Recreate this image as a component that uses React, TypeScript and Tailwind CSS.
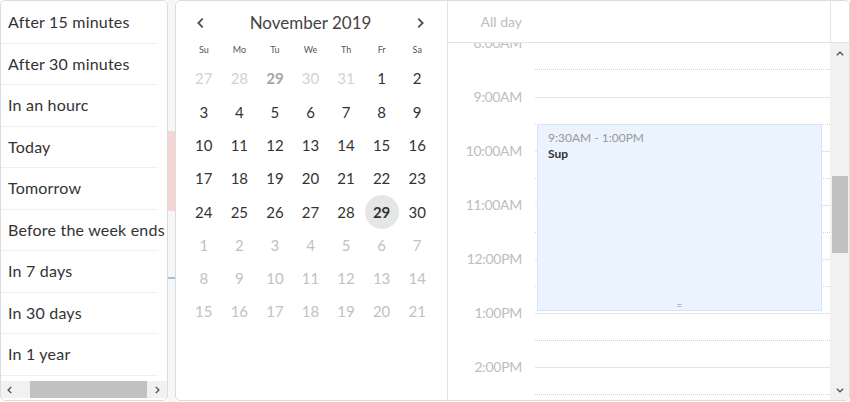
import React from 'react';

const quickPicks = [
  'After 15 minutes',
  'After 30 minutes',
  'In an hourc',
  'Today',
  'Tomorrow',
  'Before the week ends',
  'In 7 days',
  'In 30 days',
  'In 1 year',
];

const weekDays = ['Su', 'Mo', 'Tu', 'We', 'Th', 'Fr', 'Sa'];

type Day = { n: number; kind: 'prev' | 'cur' | 'next'; bold?: boolean; selected?: boolean };

function buildDays(): Day[] {
  const days: Day[] = [];
  [27, 28, 29, 30, 31].forEach((n) => days.push({ n, kind: 'prev', bold: n === 29 }));
  for (let n = 1; n <= 30; n++) days.push({ n, kind: 'cur', selected: n === 29 });
  for (let n = 1; n <= 21; n++) days.push({ n, kind: 'next' });
  return days;
}

const hours = ['8:00AM', '9:00AM', '10:00AM', '11:00AM', '12:00PM', '1:00PM', '2:00PM'];

function Chevron({ dir, className }: { dir: 'left' | 'right' | 'up' | 'down'; className?: string }) {
  const paths = {
    left: 'M10 3 L5 8 L10 13',
    right: 'M6 3 L11 8 L6 13',
    up: 'M3 10 L8 5 L13 10',
    down: 'M3 6 L8 11 L13 6',
  };
  return (
    <svg viewBox="0 0 16 16" className={className} fill="none" stroke="currentColor" strokeWidth={2.2}>
      <path d={paths[dir]} />
    </svg>
  );
}

export default function App() {
  const days = buildDays();

  return (
    <div
      className="flex w-[850px] h-[402px] bg-white text-[#333] overflow-hidden"
      style={{ fontFamily: 'Lato, "Open Sans", sans-serif' }}>
      {/* quick picks */}
      <div className="w-[168px] h-[401px] shrink-0 border border-[#dcdcdc] rounded-[5px] flex flex-col overflow-hidden bg-white">
        <div className="flex-1 overflow-hidden pt-[1px]">
          {quickPicks.map((label) => (
            <div
              key={label}
              className="w-[157px] h-[41.5px] flex items-center pl-[7px] text-[16px] tracking-[0.2px] whitespace-nowrap border-b border-[#f0f0f0]">
              {label}
            </div>
          ))}
        </div>
        <div className="h-[17px] mb-[2px] bg-[#f1f1f1] flex items-center">
          <Chevron dir="left" className="w-[10px] h-[10px] mx-[4px] text-[#505050]" />
          <div className="ml-[11px] w-[117px] h-full bg-[#c1c1c1]" />
          <Chevron dir="right" className="w-[10px] h-[10px] ml-[5px] text-[#505050]" />
        </div>
      </div>

      {/* peek of page behind */}
      <div className="w-[7px] shrink-0 bg-[#f7f7f7] flex flex-col">
        <div className="h-[131px]" />
        <div className="h-[80px] bg-[#f3d6d4]" />
        <div className="h-[66px]" />
        <div className="h-[2px] bg-[#9cc6e4]" />
      </div>

      {/* calendar + day view card */}
      <div className="flex-1 h-[401px] border border-[#dcdcdc] rounded-[5px] flex overflow-hidden bg-white">
        {/* month calendar */}
        <div className="w-[272px] shrink-0 border-r border-[#e2e2e2] pl-[10px]">
          <div className="w-[249px] h-[40px] flex items-center justify-between px-[8px] pt-[3px]">
            <Chevron dir="left" className="w-[14px] h-[14px] text-[#555]" />
            <span className="text-[17px] text-[#444]">November 2019</span>
            <Chevron dir="right" className="w-[14px] h-[14px] text-[#555]" />
          </div>
          <div className="w-[249px] grid grid-cols-7 h-[17px] items-center">
            {weekDays.map((d) => (
              <span key={d} className="text-center text-[9px] text-[#555]">
                {d}
              </span>
            ))}
          </div>
          <div className="w-[249px] grid grid-cols-7 mt-[4px]">
            {days.map((d, i) => {
              const color =
                d.kind === 'prev'
                  ? d.bold
                    ? 'text-[#a5a5a5] font-bold'
                    : 'text-[#d2d2d2]'
                  : d.kind === 'next'
                    ? 'text-[#c2c2c2]'
                    : d.selected
                      ? 'text-[#333] font-bold'
                      : 'text-[#333]';
              return (
                <div key={i} className="h-[33.3px] flex items-center justify-center">
                  <span
                    className={`w-[34px] h-[34px] rounded-full flex items-center justify-center text-[15px] ${color} ${
                      d.selected ? 'bg-[#e6e6e6]' : ''
                    }`}>
                    {d.n}
                  </span>
                </div>
              );
            })}
          </div>
        </div>

        {/* day view */}
        <div className="flex-1 flex flex-col">
          <div className="h-[42px] shrink-0 flex border-b border-[#e2e2e2]">
            <div className="w-[87px] pr-[13px] flex items-center justify-end text-[14px] text-[#bdbdbd]">
              All day
            </div>
            <div className="flex-1" />
            <div className="w-[19px] border-l border-[#e2e2e2]" />
          </div>
          <div className="flex-1 flex overflow-hidden">
            <div className="flex-1 flex overflow-hidden">
              <div className="w-[87px] shrink-0 flex flex-col">
                {hours.map((h) => (
                  <div key={h} className="h-[54px] shrink-0 pr-[13px] flex justify-end">
                    <span className="-mt-[9px] h-[18px] leading-[18px] text-[14px] text-[#bdbdbd] tracking-[-0.3px]">
                      {h}
                    </span>
                  </div>
                ))}
              </div>
              <div className="flex-1 relative flex flex-col">
                {hours.map((h, i) => (
                  <div
                    key={h}
                    className={`h-[54px] shrink-0 flex flex-col ${i === 0 ? '' : 'border-t border-[#e4e4e4]'}`}>
                    <div className="h-[26px]" />
                    <div className="border-t border-dotted border-[#d4d4d4]" />
                  </div>
                ))}
                <div className="absolute left-[2px] right-[8px] top-[81px] h-[187px] bg-[#ebf3fe] border border-[#d5e4f8] px-[10px] pt-[5px] flex flex-col">
                  <span className="text-[12px] text-[#999] leading-[16px]">9:30AM - 1:00PM</span>
                  <span className="text-[12px] font-bold text-[#333] leading-[16px]">Sup</span>
                  <span className="mt-auto self-center text-[10px] leading-[10px] text-[#888]">=</span>
                </div>
              </div>
            </div>
            <div className="w-[19px] shrink-0 bg-[#f1f1f1] flex flex-col items-center">
              <Chevron dir="up" className="w-[10px] h-[10px] mt-[6px] text-[#505050]" />
              <div className="mt-[117px] w-[16px] h-[77px] bg-[#c1c1c1]" />
              <div className="flex-1" />
              <Chevron dir="down" className="w-[10px] h-[10px] mb-[5px] text-[#505050]" />
            </div>
          </div>
        </div>
      </div>
    </div>
  );
}
